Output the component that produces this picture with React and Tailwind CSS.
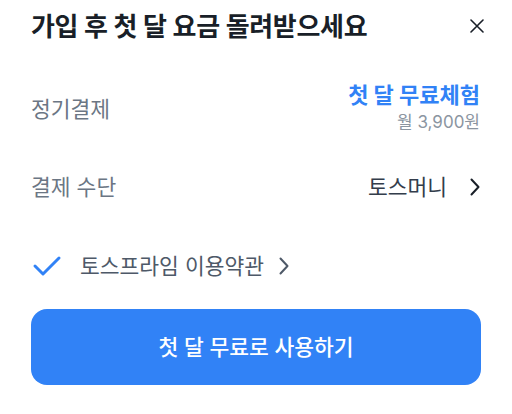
import React from "react";

const Chevron = ({ className = "", color = "#191f28" }) => (
  <svg width="12" height="20" viewBox="0 0 12 20" className={className} fill="none">
    <path d="M2.5 2.5 L9.5 10 L2.5 17.5" stroke={color} strokeWidth="2" strokeLinecap="round" strokeLinejoin="round" />
  </svg>
);

const App = () => {
  return (
    <div
      className="w-[512px] h-[414px] bg-white px-[31px] pt-[9px] overflow-hidden"
      style={{ fontFamily: 'Inter, "Noto Sans CJK KR", "Noto Sans", sans-serif' }}
    >
      <div className="flex items-center justify-between h-[34px]">
        <h1 className="text-[26px] font-bold text-[#191f28] tracking-[-0.3px]">
          가입 후 첫 달 요금 돌려받으세요
        </h1>
        <svg width="14" height="14" viewBox="0 0 14 14" className="mr-[-3px]">
          <path d="M1 1 L13 13 M13 1 L1 13" stroke="#191f28" strokeWidth="1.6" strokeLinecap="round" />
        </svg>
      </div>

      <div className="flex items-start justify-between mt-[38px]">
        <span className="text-[21.5px] text-[#6b7684] mt-[12px]">정기결제</span>
        <div className="flex flex-col items-end mr-[1px]">
          <span className="text-[22px] font-bold text-[#3182f6] leading-[28px]">첫 달 무료체험</span>
          <span className="text-[17px] text-[#8b95a1] mt-[3px] leading-[21px]">월 3,900원</span>
        </div>
      </div>

      <div className="flex items-center justify-between mt-[40px] h-[28px]">
        <span className="text-[21.5px] text-[#6b7684]">결제 수단</span>
        <div className="flex items-center gap-[22px]">
          <span className="text-[21.5px] text-[#333d4b]">토스머니</span>
          <Chevron />
        </div>
      </div>

      <div className="flex items-center mt-[51px] h-[28px]">
        <svg width="30" height="22" viewBox="0 0 30 22" className="ml-[1px]">
          <path d="M3 11 L11 19 L27 3" stroke="#3182f6" strokeWidth="3" strokeLinecap="round" strokeLinejoin="round" fill="none" />
        </svg>
        <span className="text-[21.5px] text-[#4e5968] ml-[18px]">토스프라임 이용약관</span>
        <Chevron className="ml-[14px]" color="#4e5968" />
      </div>

      <button className="mt-[29px] w-full h-[76px] rounded-[16px] bg-[#3182f6] text-white text-[21.5px] font-medium">
        첫 달 무료로 사용하기
      </button>
    </div>
  );
};

export default App;
